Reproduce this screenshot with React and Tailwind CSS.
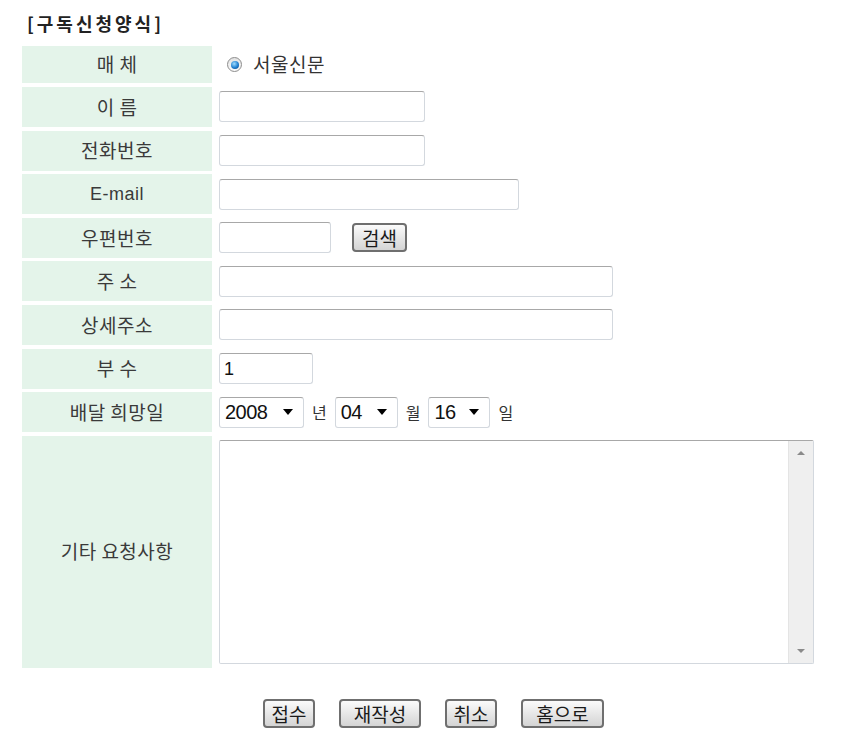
import React from 'react';

const inputCls =
  'h-[31px] bg-white border border-[#d3d8de] border-t-[#a8a8a8] rounded-[3px]';

function Row({ label, h = 'h-[40px]', children }) {
  return (
    <div className={`flex ${h}`}>
      <div className="w-[190px] shrink-0 bg-[#e4f4ea] flex items-center justify-center text-[19px] tracking-[0.5px] text-[#3a3a3a]">
        {label}
      </div>
      <div className="flex-1 pl-[7px] flex items-center">{children}</div>
    </div>
  );
}

function Select({ value, w }) {
  return (
    <div className={`${w} ${inputCls} flex items-center justify-between pl-[5px] pr-[10px]`}>
      <span className="font-['Liberation_Sans',sans-serif] text-[20px] text-[#111] leading-none tracking-[-0.5px]">
        {value}
      </span>
      <span className="w-0 h-0 border-l-[5px] border-r-[5px] border-t-[6px] border-l-transparent border-r-transparent border-t-black" />
    </div>
  );
}

function Btn({ children, w }) {
  return (
    <button
      type="button"
      className={`${w} h-[29px] border-2 border-[#6f6f6f] rounded-[4px] bg-gradient-to-b from-[#fbfbfb] to-[#d4d4d4] text-[19px] leading-none text-[#1a1a1a] flex items-center justify-center`}
    >
      {children}
    </button>
  );
}

export default function App() {
  return (
    <div className="w-[858px] h-[740px] bg-white font-['Noto_Sans_CJK_KR',sans-serif] text-[#333]">
      <div className="h-[46px] pl-[27px] flex items-center text-[18px] font-bold text-[#222] tracking-[3px]">
        [구독신청양식]
      </div>

      <div className="ml-[22px] w-[792px] flex flex-col gap-[3.6px]">
        <Row label="매 체" h="h-[37.4px]">
          <span className="w-[15px] h-[15px] rounded-full border border-[#8d8d8d] bg-gradient-to-b from-[#e2e2e2] to-[#fbfbfb] flex items-center justify-center ml-[8px]">
            <span className="w-[8px] h-[8px] rounded-full bg-[radial-gradient(circle_at_40%_35%,#9fdcff,#1f7fd0_55%,#0a3f7a)]" />
          </span>
          <span className="ml-[11px] text-[19px] tracking-[0.5px] text-[#333]">서울신문</span>
        </Row>
        <Row label="이 름">
          <div className={`w-[206px] ${inputCls}`} />
        </Row>
        <Row label="전화번호">
          <div className={`w-[206px] ${inputCls}`} />
        </Row>
        <Row label={<span className="font-['Liberation_Sans',sans-serif] text-[18px] tracking-[0.5px]">E-mail</span>}>
          <div className={`w-[300px] ${inputCls}`} />
        </Row>
        <Row label="우편번호">
          <div className={`w-[112px] ${inputCls}`} />
          <div className="ml-[21px]">
            <Btn w="w-[55px]">검색</Btn>
          </div>
        </Row>
        <Row label="주 소">
          <div className={`w-[394px] ${inputCls}`} />
        </Row>
        <Row label="상세주소">
          <div className={`w-[394px] ${inputCls}`} />
        </Row>
        <Row label="부 수">
          <div className={`w-[94px] ${inputCls} flex items-center pl-[4px]`}>
            <span className="font-['Liberation_Sans',sans-serif] text-[18px] text-[#111] leading-none">1</span>
          </div>
        </Row>
        <Row label="배달 희망일">
          <Select value="2008" w="w-[85px]" />
          <span className="mx-[8px] text-[16px] text-[#333]">년</span>
          <Select value="04" w="w-[63px]" />
          <span className="mx-[8px] text-[16px] text-[#333]">월</span>
          <Select value="16" w="w-[62px]" />
          <span className="ml-[8px] text-[16px] text-[#333]">일</span>
        </Row>
        <Row label="기타 요청사항" h="h-[232px]">
          <div className="w-[595px] h-[224px] flex bg-white border border-[#d3d8de] border-t-[#a8a8a8] rounded-[2px]">
            <div className="flex-1" />
            <div className="w-[25px] bg-[#efefef] border-l border-[#e4e4e4] flex flex-col items-center justify-between py-[10px]">
              <span className="w-0 h-0 border-l-[4px] border-r-[4px] border-b-[4px] border-l-transparent border-r-transparent border-b-[#8a8a8a]" />
              <span className="w-0 h-0 border-l-[4px] border-r-[4px] border-t-[4px] border-l-transparent border-r-transparent border-t-[#8a8a8a]" />
            </div>
          </div>
        </Row>
      </div>

      <div className="mt-[31px] ml-[263px] flex gap-[24px]">
        <Btn w="w-[52px]">접수</Btn>
        <Btn w="w-[82px]">재작성</Btn>
        <Btn w="w-[52px]">취소</Btn>
        <Btn w="w-[83px]">홈으로</Btn>
      </div>
    </div>
  );
}
